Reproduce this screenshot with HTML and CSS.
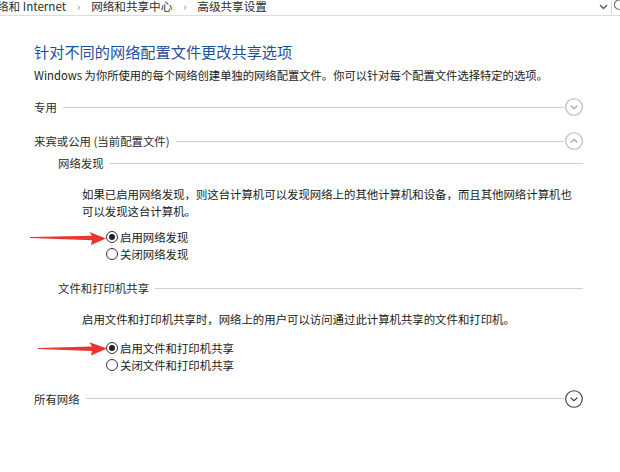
FILE: index.html
```html
<!DOCTYPE html>
<html lang="zh-CN">
<head>
<meta charset="utf-8">
<title>高级共享设置</title>
<link rel="stylesheet" href="styles.css">
</head>
<body>
<div class="page">
  <div class="topbar">
    <div class="crumbs">
      <span class="crumb">络和 Internet</span>
      <span class="sep">›</span>
      <span class="crumb">网络和共享中心</span>
      <span class="sep">›</span>
      <span class="crumb">高级共享设置</span>
    </div>
    <div class="tools">
      <svg class="dd" width="9" height="6" viewBox="0 0 9 6"><path d="M1 1 L4.5 4.5 L8 1" fill="none" stroke="#555" stroke-width="1.3"/></svg>
      <span class="vsep"></span>
      <svg class="refresh" width="9" height="12" viewBox="0 0 9 12"><path d="M8 2.5 A4.5 4.5 0 1 0 8 9" fill="none" stroke="#666" stroke-width="1.2"/></svg>
    </div>
  </div>

  <div class="content">
    <h1 class="title">针对不同的网络配置文件更改共享选项</h1>
    <p class="desc">Windows 为你所使用的每个网络创建单独的网络配置文件。你可以针对每个配置文件选择特定的选项。</p>

    <div class="section-head">
      <span class="head-text">专用</span>
      <span class="rule"></span>
      <svg class="toggle" width="18" height="18" viewBox="0 0 18 18"><circle cx="9" cy="9" r="8.3" fill="none" stroke="#b4b4b4" stroke-width="1.1"/><path d="M5.6 7.6 L9 10.8 L12.4 7.6" fill="none" stroke="#9a9a9a" stroke-width="1.2"/></svg>
    </div>

    <div class="section-head">
      <span class="head-text">来宾或公用 (当前配置文件)</span>
      <span class="rule"></span>
      <svg class="toggle" width="18" height="18" viewBox="0 0 18 18"><circle cx="9" cy="9" r="8.3" fill="none" stroke="#b4b4b4" stroke-width="1.1"/><path d="M5.6 10.6 L9 7.4 L12.4 10.6" fill="none" stroke="#9a9a9a" stroke-width="1.2"/></svg>
    </div>

    <div class="group">
      <div class="sub-head">
        <span class="head-text">网络发现</span>
        <span class="rule"></span>
      </div>
      <p class="para">如果已启用网络发现，则这台计算机可以发现网络上的其他计算机和设备，而且其他网络计算机也<br>可以发现这台计算机。</p>
      <div class="radios">
        <div class="radio"><span class="dot checked"></span><span>启用网络发现</span></div>
        <div class="radio"><span class="dot"></span><span>关闭网络发现</span></div>
      </div>
    </div>

    <div class="group group-2">
      <div class="sub-head">
        <span class="head-text">文件和打印机共享</span>
        <span class="rule"></span>
      </div>
      <p class="para">启用文件和打印机共享时，网络上的用户可以访问通过此计算机共享的文件和打印机。</p>
      <div class="radios">
        <div class="radio"><span class="dot checked"></span><span>启用文件和打印机共享</span></div>
        <div class="radio"><span class="dot"></span><span>关闭文件和打印机共享</span></div>
      </div>
    </div>

    <div class="section-head last">
      <span class="head-text">所有网络</span>
      <span class="rule"></span>
      <svg class="toggle" width="18" height="18" viewBox="0 0 18 18"><circle cx="9" cy="9" r="8.3" fill="none" stroke="#3c3c3c" stroke-width="1.1"/><path d="M5.6 7.6 L9 10.8 L12.4 7.6" fill="none" stroke="#3c3c3c" stroke-width="1.2"/></svg>
    </div>
  </div>

  <svg class="arrows" width="620" height="472" viewBox="0 0 620 472">
    <polygon points="30,237 92,235.8 89.5,232 106,238.6 91,245 92,240.2 30,238" fill="#e8362e"/>
    <polygon points="38,348 92,346.6 89.5,342.3 107,348.6 91,355.5 92,351 38,349" fill="#e8362e"/>
  </svg>
</div>
</body>
</html>
```

FILE: styles.css
```css
html, body {
  margin: 0;
  padding: 0;
  background: #ffffff;
}

.page {
  position: relative;
  width: 620px;
  height: 472px;
  overflow: hidden;
  font-family: "Noto Sans CJK SC", "Noto Sans", sans-serif;
  color: #1a1a1a;
}

.topbar {
  display: flex;
  justify-content: space-between;
  height: 15px;
  border-bottom: 1px solid #dcdcdc;
  overflow: hidden;
}

.crumbs {
  display: flex;
  align-items: flex-start;
  margin-left: -3px;
  margin-top: -1px;
  font-size: 11.6px;
  line-height: 14px;
  color: #2b2b2b;
}

.crumb {
  white-space: nowrap;
}

.sep {
  width: 25px;
  text-align: center;
  color: #8a8a8a;
  font-size: 11px;
}

.tools {
  display: flex;
  align-items: flex-start;
}

.dd {
  margin-top: 4px;
  margin-right: 3px;
}

.vsep {
  width: 1px;
  height: 15px;
  background: #dcdcdc;
  margin-right: 2px;
}

.refresh {
  margin-top: -1px;
  margin-right: -3px;
}

.content {
  padding: 0 37px 0 34px;
}

.title {
  margin: 25px 0 0 0;
  font-size: 15.2px;
  line-height: 20px;
  font-weight: normal;
  color: #1d4f9e;
  white-space: nowrap;
}

.desc {
  margin: 6px 0 0 0;
  font-size: 11.3px;
  line-height: 16px;
  color: #1a1a1a;
  white-space: nowrap;
}

.section-head {
  display: flex;
  align-items: center;
  height: 20px;
  margin-top: 14px;
}

.section-head .rule {
  margin-right: 1px;
}

.section-head.last {
  margin-top: 15px;
}

.head-text {
  font-size: 11.4px;
  line-height: 16px;
  color: #2a2a2a;
  white-space: nowrap;
}

.rule {
  flex: 1;
  height: 1px;
  background: #cfcfcf;
  margin-left: 6px;
}

.toggle {
  display: block;
  flex: none;
}

.group {
  padding-left: 24px;
  margin-top: 4px;
}

.group-2 {
  margin-top: 17.5px;
}

.sub-head {
  display: flex;
  align-items: center;
  height: 16px;
}

.para {
  margin: 15px 0 0 24px;
  font-size: 11.4px;
  line-height: 17px;
  color: #1a1a1a;
  white-space: nowrap;
}

.group-2 .para {
  margin-top: 15px;
}

.radios {
  margin: 8.5px 0 0 48px;
}

.group-2 .radios {
  margin-top: 11.5px;
}

.radio {
  display: flex;
  align-items: center;
  height: 17px;
  font-size: 11.4px;
  color: #1a1a1a;
  gap: 2px;
}

.dot {
  box-sizing: border-box;
  width: 12px;
  height: 12px;
  border: 1px solid #333;
  border-radius: 50%;
  display: flex;
  align-items: center;
  justify-content: center;
  background: #fff;
}

.dot.checked::after {
  content: "";
  width: 6px;
  height: 6px;
  border-radius: 50%;
  background: #222;
}

.arrows {
  position: absolute;
  left: 0;
  top: 0;
  pointer-events: none;
}
```
